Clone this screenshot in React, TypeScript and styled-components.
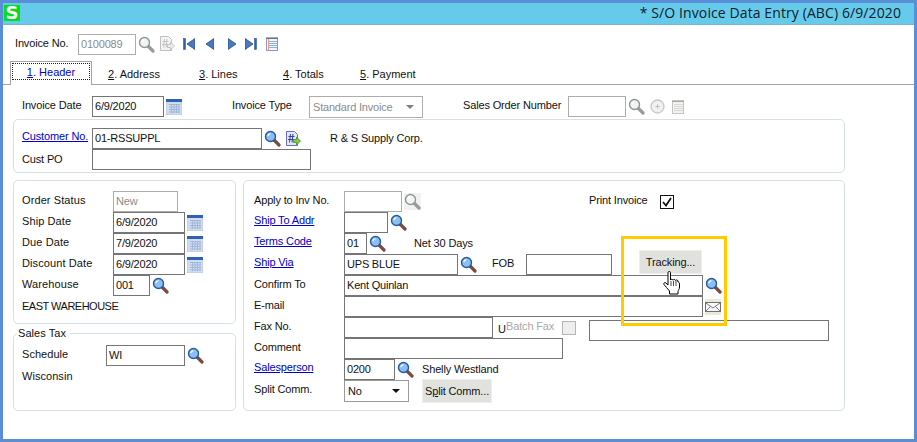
import React from "react";
import styled, { createGlobalStyle } from "styled-components";

const GlobalStyle = createGlobalStyle`
  html, body { margin: 0; padding: 0; background: #ffffff; }
  * { box-sizing: border-box; }
`

const Window = styled.div`
  position: relative;
  width: 917px;
  height: 442px;
  overflow: hidden;
  background: #ffffff;
  border: 3px solid #5a8fd8;
  font-family: "Liberation Sans", Arial, sans-serif;
  font-size: 11px;
  color: #111111;
  letter-spacing: -0.15px;
`
const TitleBar = styled.header`
  display: flex;
  align-items: center;
  justify-content: space-between;
  height: 22px;
  padding: 0 13px 2px 1px;
  background: #66cbea;
  border-bottom: 1px solid #7fb3c6;
`
const Logo = styled.div`
  display: flex;
  align-items: center;
  justify-content: center;
  width: 16px;
  height: 16px;
  background: #00e01a;
  color: #ffffff;
  font: bold 18px "DejaVu Sans", sans-serif;
`
const Title = styled.div`
  font-family: "Open Sans", sans-serif;
  font-size: 14px;
  letter-spacing: 0.1px;
  color: #10202a;
`
const Toolbar = styled.div`
  display: flex;
  align-items: center;
  height: 20px;
  margin-top: 9px;
  padding-left: 12px;
`
const Tabs = styled.nav`
  display: flex;
  align-items: flex-end;
  height: 24px;
  margin-top: 7px;
  padding-left: 7px;
  border-bottom: 1px solid #a5a5a5;
  letter-spacing: 0;
`
const ActiveTab = styled.div`
  width: 82px;
  height: 24px;
  margin-bottom: -1px;
  padding: 1px 1px 0;
  background: #ffffff;
  border: 1px solid #a5a5a5;
  border-bottom: none;
  color: #0000cc;
  div {
    display: flex;
    align-items: center;
    justify-content: center;
    height: 17px;
    border: 1px dotted #222222;
  }
`
const Tab = styled.div<{ $w: number }>`
  width: ${p => p.$w}px;
  height: 23px;
  padding: 7px 0 0 16px;
  white-space: nowrap;
`
const TopRow = styled.div`
  display: flex;
  align-items: center;
  height: 21px;
  margin-top: 11px;
  padding-left: 19px;
`
const Main = styled.main`
  display: flex;
  flex-direction: column;
  gap: 7px;
  width: 832px;
  margin: 2px 0 0 10px;
`
const Panel = styled.section<{ $h: number }>`
  position: relative;
  height: ${p => p.$h}px;
  background: #ffffff;
  border: 1px solid #d6e0e7;
  border-radius: 5px;
`
const CustomerPanel = styled(Panel)`
  padding: 8px 0 0 8px;
`
const Columns = styled.div`
  display: flex;
  gap: 7px;
`
const LeftColumn = styled.div`
  display: flex;
  flex-direction: column;
  gap: 9px;
  width: 223px;
`
const LeftPanel = styled(Panel)`
  padding: 10px 0 0 8px;
  letter-spacing: 0.1px;
`
const TaxPanel = styled(Panel)`
  padding: 11px 0 0 8px;
  letter-spacing: 0.05px;
`
const RightPanel = styled(Panel)`
  width: 602px;
  padding: 10px 0 0 10px;
`
const Legend = styled.div`
  position: absolute;
  top: -7px;
  left: 3px;
  padding: 0 4px 0 1px;
  background: #ffffff;
`
const Row = styled.div`
  display: flex;
  align-items: center;
  height: 21px;
`
const Label = styled.div<{ $w?: number; $ml?: number; $ls?: number }>`
  flex: none;
  width: ${p => (p.$w ? `${p.$w}px` : "auto")};
  margin-left: ${p => p.$ml || 0}px;
  padding-bottom: 4px;
  white-space: nowrap;
  ${p => (p.$ls !== undefined ? `letter-spacing: ${p.$ls}px;` : "")}
`
const Note = styled(Label)`
  padding-bottom: 2px;
`
const LinkLabel = styled(Label)`
  padding-bottom: 5px;
  color: #0000cc;
  text-decoration: underline;
`
const MutedLabel = styled(Label)`
  color: #a8a8a8;
`
const HotKey = styled(Label)`
  padding: 3px 0 0;
`
const Field = styled.div<{ $w: number; $off?: boolean; $ml?: number; $mt?: number }>`
  flex: none;
  display: flex;
  align-items: center;
  width: ${p => p.$w}px;
  height: 21px;
  margin-left: ${p => p.$ml || 0}px;
  margin-top: ${p => p.$mt || 0}px;
  padding: 0 0 1px 2px;
  background: #ffffff;
  border: 1px solid ${p => (p.$off ? "#adadad" : "#757575")};
  color: ${p => (p.$off ? "#8c8c8c" : "#111111")};
  letter-spacing: -0.2px;
  white-space: nowrap;
`
const Select = styled(Field)`
  justify-content: space-between;
  padding: 0 8px 0 3px;
  height: 22px;
  border-color: ${p => (p.$off ? "#adadad" : "#9a9a9a")};
`
const Caret = styled.span<{ $off?: boolean }>`
  width: 0;
  height: 0;
  border-left: 4px solid transparent;
  border-right: 4px solid transparent;
  border-top: 4px solid ${p => (p.$off ? "#808080" : "#111111")};
`
const Button = styled.div<{ $w: number; $ml: number; $mt?: number }>`
  flex: none;
  display: flex;
  align-items: center;
  justify-content: center;
  width: ${p => p.$w}px;
  height: 24px;
  margin-left: ${p => p.$ml}px;
  margin-top: ${p => p.$mt || 0}px;
  background: #e1e2de;
  border: 1px solid #eeeeec;
  white-space: nowrap;
`
const Check = styled.div<{ $off?: boolean; $ml: number }>`
  flex: none;
  display: flex;
  align-items: center;
  justify-content: center;
  width: 14px;
  height: 14px;
  margin-left: ${p => p.$ml}px;
  background: ${p => (p.$off ? "#eeeeee" : "#ffffff")};
  border: 1px solid ${p => (p.$off ? "#b4b4b4" : "#111111")};
`
const IconBox = styled.svg<{ $ml?: number; $shade?: boolean }>`
  flex: none;
  display: block;
  margin-left: ${p => p.$ml ?? 2}px;
  background: ${p => (p.$shade ? "#f1f1f1" : "transparent")};
`
const Highlight = styled.div`
  position: absolute;
  left: 618px;
  top: 233px;
  width: 106px;
  height: 90px;
  border: 3px solid #ffcc00;
  pointer-events: none;
`
const Pointer = styled.svg`
  position: absolute;
  left: 660px;
  top: 268px;
`

function Magnifier({ off, ml, shade }: { off?: boolean; ml?: number; shade?: boolean }) {
  return (
    <IconBox $ml={ml} $shade={shade} width="17" height="17" viewBox="0 0 17 17">
      <line x1="10" y1="10" x2="15" y2="15" stroke={off ? "#9a9a9a" : "#7d4a42"} strokeWidth="3.2" strokeLinecap="round" />
      <circle cx="6.5" cy="6.5" r="5" fill={off ? "#f2f4f4" : "#8fbdf0"} stroke={off ? "#8f9696" : "#1d5ca8"} strokeWidth="1.4" />
      <path d="M3.8 6.2a3 3 0 0 1 2.6-2.6" fill="none" stroke="#ffffff" strokeWidth="1.2" />
    </IconBox>
  )
}

function Calendar() {
  return (
    <IconBox width="16" height="16" viewBox="0 0 16 16">
      <rect x="0" y="1" width="16" height="15" fill="#d0ddf1" stroke="#a9bbdc" strokeWidth="0.6" />
      <rect x="0" y="0" width="16" height="3" fill="#2f62b4" />
      <path d="M3 5.500h11M3 8h11M3 10.500h11M3 13h11M5.500 5v9M8 5v9M10.500 5v9M13 5v9" stroke="#a3b6d8" strokeWidth="1" fill="none" />
    </IconBox>
  )
}

function Notepad({ off, ml }: { off?: boolean; ml?: number }) {
  return (
    <IconBox $ml={ml} width="12" height="14" viewBox="0 0 12 14">
      <rect x="0.5" y="1.5" width="11" height="12" fill={off ? "#f4f4ec" : "#f1f6fb"} stroke={off ? "#c4c4c4" : "#8a9bb2"} />
      <path d="M1 0v2M3 0v2M5 0v2M7 0v2M9 0v2M11 0v2" stroke={off ? "#8c8c8c" : "#555555"} strokeWidth="1" />
      <path d="M2 4.500h9M2 6.500h9M2 8.500h9M2 10.500h9" stroke={off ? "#d8d8d8" : "#8fb2dc"} strokeWidth="1" />
      {!off && <path d="M2.500 2v11" stroke="#e59a8c" strokeWidth="1" />}
    </IconBox>
  )
}

function NavArrow({ dir, bar, ml }: { dir: "left" | "right"; bar?: boolean; ml: number }) {
  const w = bar ? 12 : 8
  const tri = dir === "left"
    ? `M${w} 0.5v11L${w - 8} 6z`
    : `M0 0.5v11L8 6z`
  return (
    <IconBox $ml={ml} width={w} height="12" viewBox={`0 0 ${w} 12`}>
      <path d={tri} fill="#4c79bd" stroke="#1f4c94" strokeWidth="0.8" />
      {bar && <rect x={dir === "left" ? 0.5 : 9.5} y="0.5" width="2" height="11" fill="#2f62ac" stroke="#1f4c94" strokeWidth="0.5" />}
    </IconBox>
  )
}

function DocArrows({ active, ml }: { active?: boolean; ml: number }) {
  return (
    <IconBox $ml={ml} width="16" height="16" viewBox="0 0 16 16">
      <path d="M1.500 0.500h8l3 3v11h-11z" fill={active ? "#e4e6fa" : "#f4f4f4"} stroke={active ? "#6a70b8" : "#c0c0c0"} />
      <path d="M3.500 5.500h6M3 8.500h6M5.500 3l-1 8.500M8 3l-1 8.500" stroke={active ? "#3a3fa0" : "#c4c4c4"} strokeWidth="1" fill="none" />
      <path d="M8.500 8.500h3v-2.500l4 4-4 4v-2.500h-3z" fill={active ? "#7fcf3c" : "#ececec"} stroke={active ? "#3f8f22" : "#b8b8b8"} strokeWidth="0.8" />
    </IconBox>
  )
}

function PlusCircle() {
  return (
    <IconBox $ml={5} width="15" height="15" viewBox="0 0 15 15">
      <circle cx="7.500" cy="7.500" r="6.500" fill="#f0f0f0" stroke="#c8c8c8" strokeWidth="1.300" />
      <path d="M7.500 5.500v4M5.500 7.500h4" stroke="#bdbdbd" strokeWidth="1" />
    </IconBox>
  )
}

function Envelope() {
  return (
    <IconBox width="16" height="16" viewBox="0 0 16 16">
      <rect width="16" height="16" fill="#ece9d8" />
      <rect x="0.500" y="3.500" width="15" height="9" fill="#f8f8f8" stroke="#6f6f6f" />
      <path d="M1 4l7 5 7-5M1 12l5-5M15 12l-5-5" fill="none" stroke="#7d7d7d" />
    </IconBox>
  )
}

function Tick() {
  return (
    <svg width="10" height="10" viewBox="0 0 10 10">
      <path d="M1 5l3 3.500L9 1" fill="none" stroke="#111111" strokeWidth="1.800" />
    </svg>
  )
}

function App() {
  return (
    <Window>
      <GlobalStyle />
      <TitleBar>
        <Logo>S</Logo>
        <Title>* S/O Invoice Data Entry (ABC) 6/9/2020</Title>
      </TitleBar>
      <Toolbar>
        <Note $w={63}>Invoice No.</Note>
        <Field $w={58} $off>0100089</Field>
        <Magnifier off />
        <DocArrows ml={4} />
        <NavArrow dir="left" bar ml={8} />
        <NavArrow dir="left" ml={11} />
        <NavArrow dir="right" ml={14} />
        <NavArrow dir="right" bar ml={9} />
        <Notepad ml={9} />
      </Toolbar>
      <Tabs>
        <ActiveTab><div><span><u>1</u>. Header</span></div></ActiveTab>
        <Tab $w={91}><u>2</u>. Address</Tab>
        <Tab $w={84}><u>3</u>. Lines</Tab>
        <Tab $w={77}><u>4</u>. Totals</Tab>
        <Tab $w={90}><u>5</u>. Payment</Tab>
      </Tabs>
      <TopRow>
        <Label $w={70}>Invoice Date</Label>
        <Field $w={72}>6/9/2020</Field>
        <Calendar />
        <Label $w={77} $ml={50}>Invoice Type</Label>
        <Select $w={114} $off>Standard Invoice<Caret $off /></Select>
        <Label $w={105} $ml={40}>Sales Order Number</Label>
        <Field $w={58} $off />
        <Magnifier off />
        <PlusCircle />
        <Notepad off ml={7} />
      </TopRow>
      <Main>
        <CustomerPanel $h={54}>
          <Row>
            <LinkLabel $w={70}>Customer No.</LinkLabel>
            <Field $w={170}>01-RSSUPPL</Field>
            <Magnifier />
            <DocArrows active ml={4} />
            <Note $ml={29}>R &amp; S Supply Corp.</Note>
          </Row>
          <Row>
            <Note $w={70}>Cust PO</Note>
            <Field $w={219} />
          </Row>
        </CustomerPanel>
        <Columns>
          <LeftColumn>
            <LeftPanel $h={144}>
              <Row>
                <Label $w={91}>Order Status</Label>
                <Field $w={65} $off>New</Field>
              </Row>
              <Row>
                <Label $w={91}>Ship Date</Label>
                <Field $w={72}>6/9/2020</Field>
                <Calendar />
              </Row>
              <Row>
                <Label $w={91}>Due Date</Label>
                <Field $w={72}>7/9/2020</Field>
                <Calendar />
              </Row>
              <Row>
                <Label $w={91}>Discount Date</Label>
                <Field $w={72}>6/9/2020</Field>
                <Calendar />
              </Row>
              <Row>
                <Label $w={91}>Warehouse</Label>
                <Field $w={37}>001</Field>
                <Magnifier />
              </Row>
              <Row>
                <Note $ls={-0.5}>EAST WAREHOUSE</Note>
              </Row>
            </LeftPanel>
            <TaxPanel $h={78}>
              <Legend>Sales Tax</Legend>
              <Row>
                <Label $w={84}>Schedule</Label>
                <Field $w={79}>WI</Field>
                <Magnifier />
              </Row>
              <Row>
                <Note>Wisconsin</Note>
              </Row>
            </TaxPanel>
          </LeftColumn>
          <RightPanel $h={231}>
            <Row>
              <Label $w={90}>Apply to Inv No.</Label>
              <Field $w={58} $off />
              <Magnifier off shade />
              <Label $w={59} $ml={168}>Print Invoice</Label>
              <Check $ml={12}><Tick /></Check>
            </Row>
            <Row>
              <LinkLabel $w={90}>Ship To Addr</LinkLabel>
              <Field $w={44} />
              <Magnifier />
            </Row>
            <Row>
              <LinkLabel $w={90}>Terms Code</LinkLabel>
              <Field $w={23}>01</Field>
              <Magnifier />
              <Note $ml={28}>Net 30 Days</Note>
            </Row>
            <Row>
              <LinkLabel $w={90}>Ship Via</LinkLabel>
              <Field $w={114}>UPS BLUE</Field>
              <Magnifier />
              <Label $w={34} $ml={15}>FOB</Label>
              <Field $w={86} />
              <Button $w={63} $ml={27} $mt={-5}>Tracking...</Button>
            </Row>
            <Row>
              <Label $w={90}>Confirm To</Label>
              <Field $w={359}>Kent Quinlan</Field>
              <Magnifier />
            </Row>
            <Row>
              <Label $w={90}>E-mail</Label>
              <Field $w={359} />
              <Envelope />
            </Row>
            <Row>
              <Label $w={90}>Fax No.</Label>
              <Field $w={149} />
              <HotKey $w={8} $ml={5}>U</HotKey>
              <MutedLabel $w={48}>Batch Fax</MutedLabel>
              <Check $off $ml={8} />
              <Field $w={240} $ml={13} $mt={6} />
            </Row>
            <Row>
              <Label $w={90}>Comment</Label>
              <Field $w={219} />
            </Row>
            <Row>
              <LinkLabel $w={90}>Salesperson</LinkLabel>
              <Field $w={51}>0200</Field>
              <Magnifier />
              <Note $ml={8}>Shelly Westland</Note>
            </Row>
            <Row>
              <Label $w={90}>Split Comm.</Label>
              <Select $w={65}>No<Caret /></Select>
              <Button $w={70} $ml={13}>S<u>p</u>lit Comm...</Button>
            </Row>
          </RightPanel>
        </Columns>
      </Main>
      <Highlight />
      <Pointer width="19" height="24" viewBox="0 0 19 24">
        <path
          d="M5 1.500c0-1.300 2.500-1.300 2.500 0V9c.3-1 2.300-1 2.500.2.300-1 2.300-1 2.500.3.300-.8 2.300-.8 2.500.5v1c1 0 1.500.8 1.500 2v3c0 2-1 3-1.500 4.500v2.500H6.500V20C5 18 2 15 1 13.500c-.8-1.500.8-2.500 2-1.500L5 14z"
          fill="#ffffff"
          stroke="#000000"
          strokeWidth="1"
        />
        <path d="M8 10v5M10.500 10v5M13 10v5" stroke="#000000" strokeWidth="0.700" />
      </Pointer>
    </Window>
  )
}

export default App;
